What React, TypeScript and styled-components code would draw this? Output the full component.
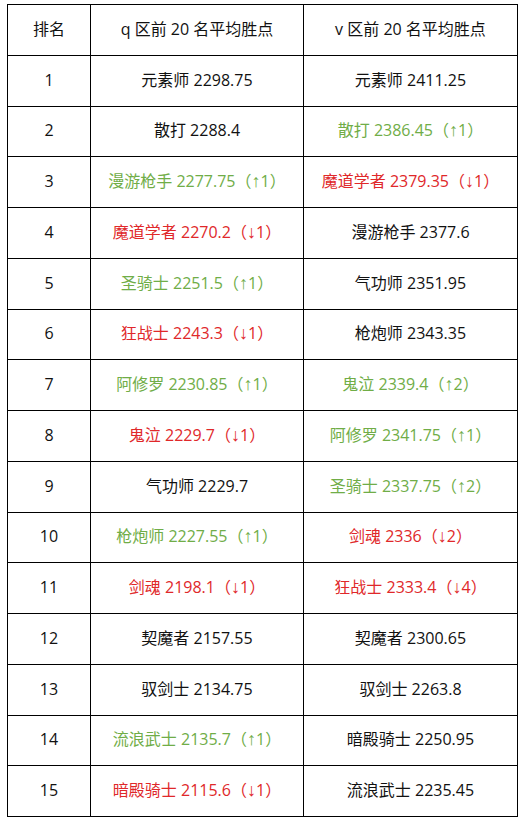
import React from "react";
import styled, { createGlobalStyle } from "styled-components";

const Global = createGlobalStyle`
  html, body { margin: 0; padding: 0; background: #fff; }
  body { font-family: "Open Sans", "Noto Sans CJK SC", sans-serif; }
`;

const Page = styled.div`
  padding: 4px 0 0 7px;
`;

const Table = styled.table`
  border-collapse: collapse;
  width: 511px;
  table-layout: fixed;
  color: #111;
  font-size: 16px;
  line-height: 20px;
`;

const Row = styled.tr`
  height: 50.75px;
`;

const Cell = styled.td<{ $tone?: "up" | "down" | "none" }>`
  border: 1px solid #000;
  padding: 0 0 2px;
  text-align: center;
  vertical-align: middle;
  white-space: nowrap;
  overflow: hidden;
  color: ${(p) => (p.$tone === "up" ? "#70ad47" : p.$tone === "down" ? "#e0282a" : "#111")};
`;

const Head = styled(Cell).attrs({ as: "th" })`
  font-weight: normal;
`;

const Arrow = styled.span`
  font-family: "Liberation Sans", "DejaVu Sans", sans-serif;
  font-size: 18px;
  line-height: 16px;
`;

type Entry = { name: string; tone?: "up" | "down"; change?: string };

const rows: [Entry, Entry][] = [
  [{ name: "元素师 2298.75" }, { name: "元素师 2411.25" }],
  [{ name: "散打 2288.4" }, { name: "散打 2386.45", tone: "up", change: "1" }],
  [{ name: "漫游枪手 2277.75", tone: "up", change: "1" }, { name: "魔道学者 2379.35", tone: "down", change: "1" }],
  [{ name: "魔道学者 2270.2", tone: "down", change: "1" }, { name: "漫游枪手 2377.6" }],
  [{ name: "圣骑士 2251.5", tone: "up", change: "1" }, { name: "气功师 2351.95" }],
  [{ name: "狂战士 2243.3", tone: "down", change: "1" }, { name: "枪炮师 2343.35" }],
  [{ name: "阿修罗 2230.85", tone: "up", change: "1" }, { name: "鬼泣 2339.4", tone: "up", change: "2" }],
  [{ name: "鬼泣 2229.7", tone: "down", change: "1" }, { name: "阿修罗 2341.75", tone: "up", change: "1" }],
  [{ name: "气功师 2229.7" }, { name: "圣骑士 2337.75", tone: "up", change: "2" }],
  [{ name: "枪炮师 2227.55", tone: "up", change: "1" }, { name: "剑魂 2336", tone: "down", change: "2" }],
  [{ name: "剑魂 2198.1", tone: "down", change: "1" }, { name: "狂战士 2333.4", tone: "down", change: "4" }],
  [{ name: "契魔者 2157.55" }, { name: "契魔者 2300.65" }],
  [{ name: "驭剑士 2134.75" }, { name: "驭剑士 2263.8" }],
  [{ name: "流浪武士 2135.7", tone: "up", change: "1" }, { name: "暗殿骑士 2250.95" }],
  [{ name: "暗殿骑士 2115.6", tone: "down", change: "1" }, { name: "流浪武士 2235.45" }],
];

function Value({ e }: { e: Entry }) {
  return (
    <Cell $tone={e.tone}>
      {e.name}
      {e.change && (
        <>
          （<Arrow>{e.tone === "up" ? "↑" : "↓"}</Arrow>
          {e.change}）
        </>
      )}
    </Cell>
  );
}

export default function App() {
  return (
    <Page>
      <Global />
      <Table>
        <colgroup>
          <col style={{ width: 83 }} />
          <col style={{ width: 213 }} />
          <col style={{ width: 214 }} />
        </colgroup>
        <thead>
          <Row>
            <Head>排名</Head>
            <Head>q 区前 20 名平均胜点</Head>
            <Head>v 区前 20 名平均胜点</Head>
          </Row>
        </thead>
        <tbody>
          {rows.map((r, i) => (
            <Row key={i}>
              <Cell>{i + 1}</Cell>
              <Value e={r[0]} />
              <Value e={r[1]} />
            </Row>
          ))}
        </tbody>
      </Table>
    </Page>
  );
}
